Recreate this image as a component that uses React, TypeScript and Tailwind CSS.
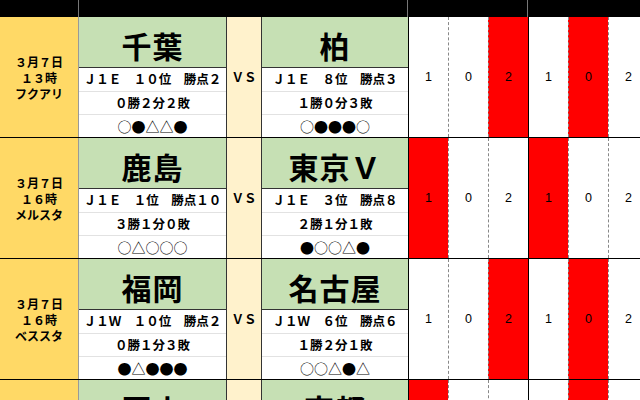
import React from "react";

type Team = {
  name: string;
  info: string;
  record: string;
  form: string;
};

type Match = {
  date: string;
  time: string;
  venue: string;
  home: Team;
  away: Team;
  red: number[]; // which score columns are highlighted
};

const matches: Match[] = [
  {
    date: "３月７日",
    time: "１３時",
    venue: "フクアリ",
    home: { name: "千葉", info: "Ｊ１Ｅ　１０位　勝点２", record: "０勝２分２敗", form: "○●△△●" },
    away: { name: "柏", info: "Ｊ１Ｅ　８位　勝点３", record: "１勝０分３敗", form: "○●●●○" },
    red: [2, 4],
  },
  {
    date: "３月７日",
    time: "１６時",
    venue: "メルスタ",
    home: { name: "鹿島", info: "Ｊ１Ｅ　１位　勝点１０", record: "３勝１分０敗", form: "○△○○○" },
    away: { name: "東京Ｖ", info: "Ｊ１Ｅ　３位　勝点８", record: "２勝１分１敗", form: "●○○△●" },
    red: [0, 3],
  },
  {
    date: "３月７日",
    time: "１６時",
    venue: "ベススタ",
    home: { name: "福岡", info: "Ｊ１Ｗ　１０位　勝点２", record: "０勝１分３敗", form: "●△●●●" },
    away: { name: "名古屋", info: "Ｊ１Ｗ　６位　勝点６", record: "１勝２分１敗", form: "○○△●△" },
    red: [2, 4],
  },
  {
    date: "",
    time: "",
    venue: "",
    home: { name: "岡山", info: "", record: "", form: "" },
    away: { name: "京都", info: "", record: "", form: "" },
    red: [0, 4],
  },
];

const scores = ["1", "0", "2", "1", "0", "2"];

const TeamBlock = ({ team, width }: { team: Team; width: string }) => (
  <div className={`${width} flex flex-col shrink-0`}>
    {/* Team name */}
    <div className="h-[51px] pt-[6px] bg-[#C6E0B4] border-b border-[#333] flex items-center justify-center text-[30px] font-bold leading-none tracking-[1px]">
      {team.name}
    </div>
    <div className="h-[24px] bg-white border-b border-[#e2e2e2] flex items-center justify-center text-[12.5px] font-bold whitespace-nowrap">
      {team.info}
    </div>
    <div className="h-[23px] bg-white border-b border-[#e2e2e2] flex items-center justify-center text-[12.5px] font-bold whitespace-nowrap">
      {team.record}
    </div>
    <div className="h-[22px] bg-white flex items-center justify-center text-[14px] leading-none whitespace-nowrap">
      {team.form}
    </div>
  </div>
);

const MatchRow = ({ match }: { match: Match }) => (
  <div className="flex h-[121px] border-b border-black shrink-0">
    {/* Date / time / venue */}
    <div className="w-[79px] shrink-0 bg-[#FFD966] border-r border-[#999] flex flex-col items-center justify-center pt-[2px] text-[12px] font-bold leading-[16px]">
      <div>{match.date}</div>
      <div>{match.time}</div>
      <div>{match.venue}</div>
    </div>

    <TeamBlock team={match.home} width="w-[147px]" />

    {/* VS */}
    <div className="w-[36px] shrink-0 bg-[#FFF2CC] border-x border-[#333] flex items-center justify-center text-[12.5px] font-bold">
      {match.date ? "ＶＳ" : ""}
    </div>

    <TeamBlock team={match.away} width="w-[146px]" />

    {/* Score columns */}
    {scores.map((s, i) => (
      <div
        key={i}
        className={
          "w-[40px] shrink-0 flex items-center justify-center text-[12.5px] font-['Liberation_Sans',sans-serif] border-l " +
          (i % 3 === 0 ? "border-solid border-black " : "border-dashed border-[#888] ") +
          (match.red.includes(i) ? "bg-[#FF0000]" : "bg-white")
        }
      >
        {match.date ? s : ""}
      </div>
    ))}
  </div>
);

const App = () => {
  return (
    <div className="w-[640px] h-[400px] overflow-hidden bg-white text-black font-['Noto_Sans_CJK_JP','Noto_Sans',sans-serif]">
      {/* Header band */}
      <div className="flex h-[17px] bg-black">
        <div className="w-[79px] shrink-0 border-r border-[#777]" />
        <div className="w-[329px] shrink-0 border-r border-[#777]" />
        <div className="w-[120px] shrink-0 border-r border-[#777]" />
        <div className="flex-1" />
      </div>

      {matches.map((m, i) => (
        <MatchRow key={i} match={m} />
      ))}
    </div>
  );
};

export default App;
